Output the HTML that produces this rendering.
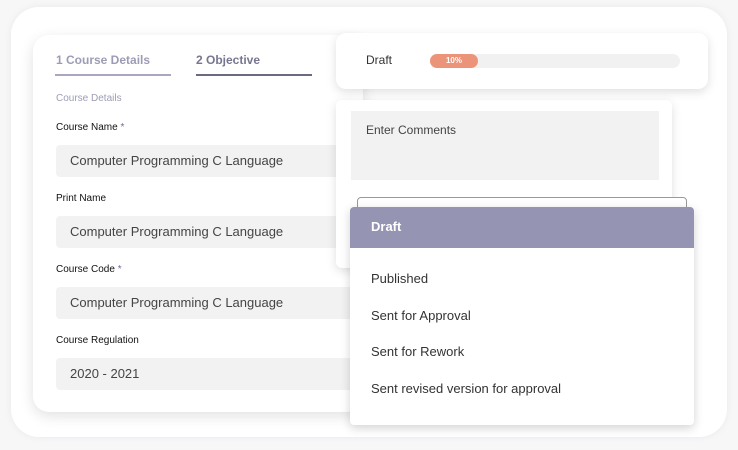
<!DOCTYPE html>
<html><head><style>
body{margin:0;width:738px;height:450px;background:#f7f7f8;font-family:"Liberation Sans",sans-serif;position:relative;overflow:hidden}
.a{position:absolute}
.outer{left:11px;top:7px;width:716px;height:430px;background:#fff;border-radius:28px;box-shadow:0 0 8px rgba(0,0,0,.06)}
.left{left:33px;top:35px;width:330px;height:377px;background:#fff;border-radius:16px;box-shadow:0 4px 14px rgba(0,0,0,.12)}
.lbl{font-size:10px;color:#111;left:56px}
.inp{left:56px;width:300px;height:32px;background:#f2f2f2;border-radius:4px;font-size:13px;color:#444;line-height:32px;text-indent:14px}
.card{background:#fff;border-radius:10px;box-shadow:0 3px 10px rgba(0,0,0,.13)}
.opt{left:371px;font-size:13px;color:#333}
</style></head><body>
<div class="a outer"></div>
<div class="a left"></div>
<div class="a" style="left:56px;top:53px;font-size:12px;font-weight:bold;color:#9d9cb5">1 Course Details</div>
<div class="a" style="left:55px;top:74px;width:116px;height:2px;background:#a9a8c0"></div>
<div class="a" style="left:196px;top:53px;font-size:12px;font-weight:bold;color:#777690">2 Objective</div>
<div class="a" style="left:196px;top:74px;width:116px;height:2px;background:#6b6a7f"></div>
<div class="a" style="left:56px;top:93px;font-size:10px;color:#9d9cb5">Course Details</div>
<div class="a lbl" style="top:122px">Course Name <span style="color:#6b6aa0">*</span></div>
<div class="a inp" style="top:145px">Computer Programming C Language</div>
<div class="a lbl" style="top:193px">Print Name</div>
<div class="a inp" style="top:216px">Computer Programming C Language</div>
<div class="a lbl" style="top:264px">Course Code <span style="color:#6b6aa0">*</span></div>
<div class="a inp" style="top:287px">Computer Programming C Language</div>
<div class="a lbl" style="top:335px">Course Regulation</div>
<div class="a inp" style="top:358px">2020 - 2021</div>

<div class="a card" style="left:336px;top:100px;width:336px;height:168px;border-radius:6px"></div>
<div class="a" style="left:351px;top:111px;width:308px;height:69px;background:#f2f2f2"></div>
<div class="a" style="left:366px;top:123px;font-size:12px;color:#444">Enter Comments</div>
<div class="a" style="left:357px;top:197px;width:328px;height:20px;border:1px solid #999;border-radius:4px;background:#fff"></div>

<div class="a card" style="left:336px;top:33px;width:372px;height:56px"></div>
<div class="a" style="left:366px;top:53px;font-size:12px;color:#333">Draft</div>
<div class="a" style="left:430px;top:54px;width:250px;height:14px;background:#f1f1f1;border-radius:7px"></div>
<div class="a" style="left:430px;top:54px;width:48px;height:14px;background:#ec9479;border-radius:7px;color:#fff;font-size:8px;font-weight:bold;text-align:center;line-height:14px">10%</div>

<div class="a" style="left:350px;top:207px;width:344px;height:218px;background:#fff;border-radius:4px;box-shadow:0 3px 10px rgba(0,0,0,.18)"></div>
<div class="a" style="left:350px;top:207px;width:344px;height:41px;background:#9594b2;border-radius:4px 4px 0 0"></div>
<div class="a" style="left:371px;top:219px;font-size:13px;color:#fff;font-weight:bold">Draft</div>
<div class="a opt" style="top:271px">Published</div>
<div class="a opt" style="top:308px">Sent for Approval</div>
<div class="a opt" style="top:344px">Sent for Rework</div>
<div class="a opt" style="top:381px">Sent revised version for approval</div>
</body></html>
